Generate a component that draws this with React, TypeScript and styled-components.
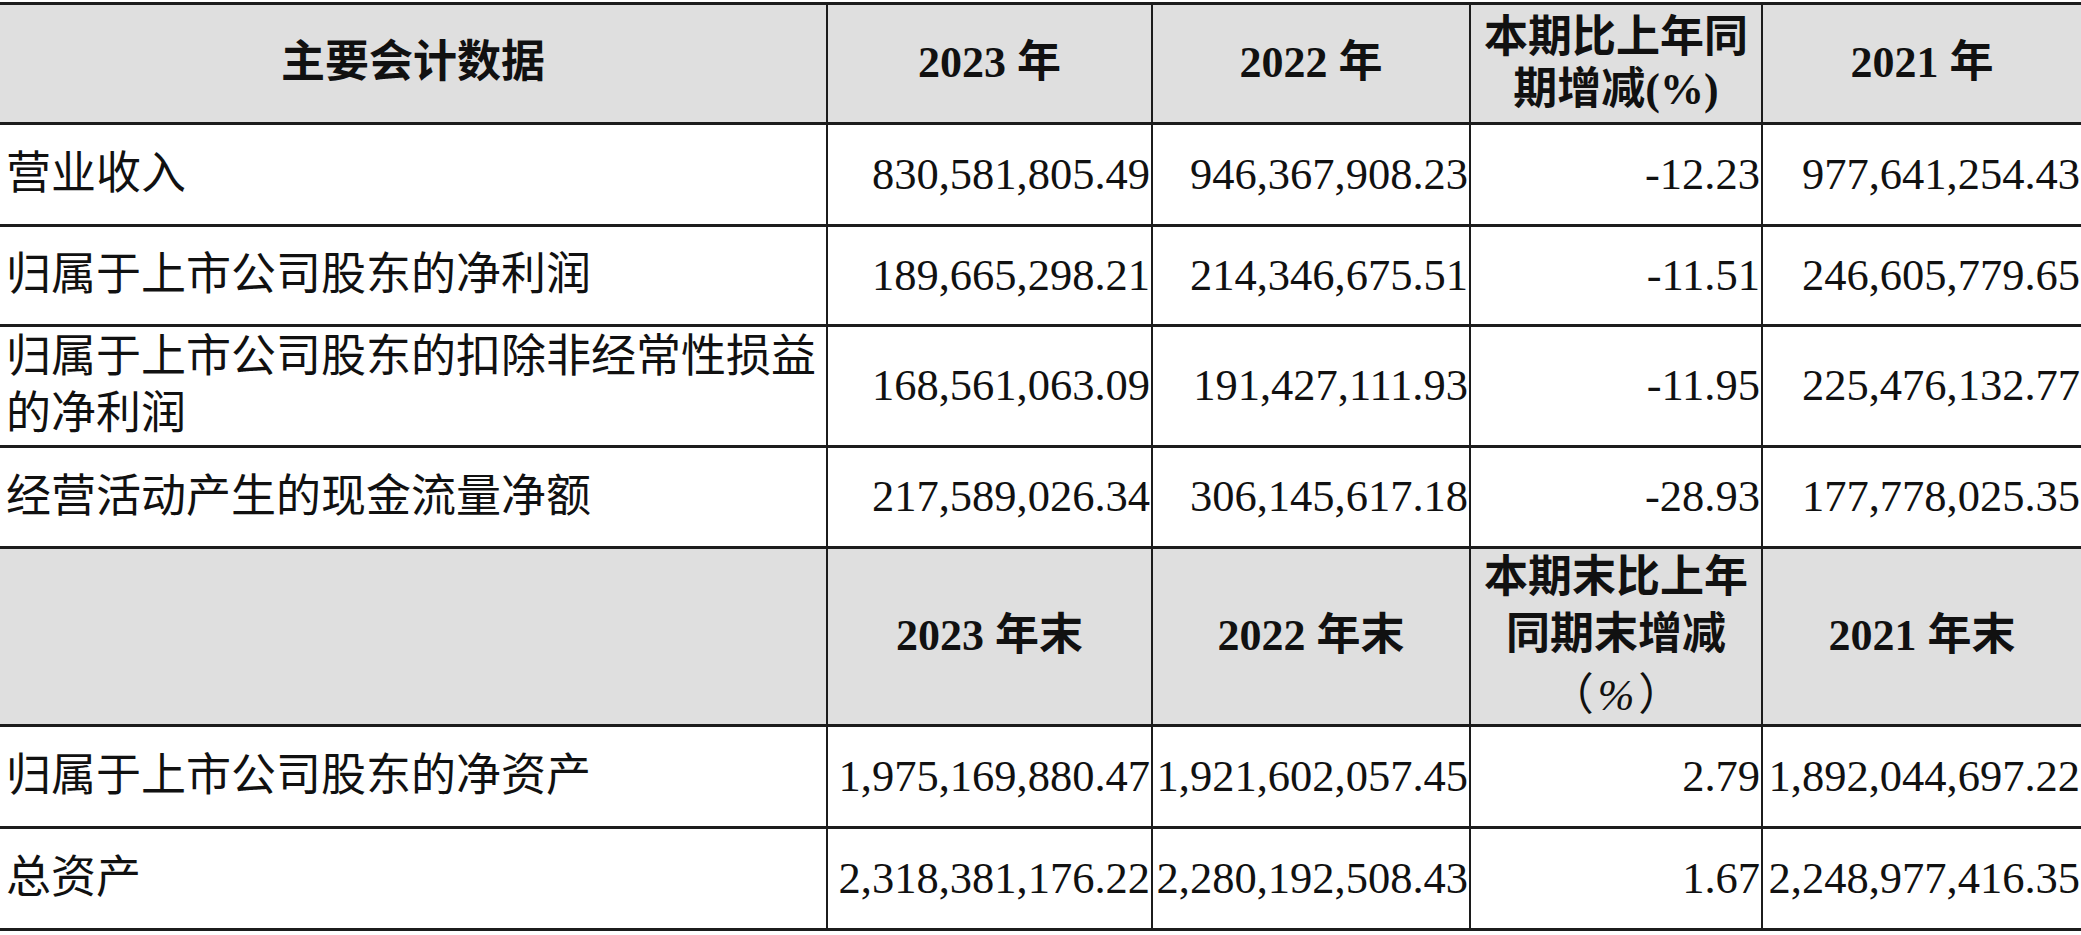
import styled, { createGlobalStyle } from "styled-components";

const GlobalStyle = createGlobalStyle`
  html, body {
    margin: 0;
    padding: 0;
    background: #ffffff;
  }
  body {
    font-family: "Liberation Serif", "Noto Sans CJK SC", serif;
    color: #111111;
  }
`;

const periodRows = [
  ["营业收入", "830,581,805.49", "946,367,908.23", "-12.23", "977,641,254.43"],
  ["归属于上市公司股东的净利润", "189,665,298.21", "214,346,675.51", "-11.51", "246,605,779.65"],
  ["归属于上市公司股东的扣除非经常性损益\n的净利润", "168,561,063.09", "191,427,111.93", "-11.95", "225,476,132.77"],
  ["经营活动产生的现金流量净额", "217,589,026.34", "306,145,617.18", "-28.93", "177,778,025.35"],
];
const periodHeights = [102, 100, 121, 101];

const balanceRows = [
  ["归属于上市公司股东的净资产", "1,975,169,880.47", "1,921,602,057.45", "2.79", "1,892,044,697.22"],
  ["总资产", "2,318,381,176.22", "2,280,192,508.43", "1.67", "2,248,977,416.35"],
];
const balanceHeights = [102, 102];

function Lines({ text }: { text: string }) {
  const parts = text.split("\n");
  return (
    <>
      {parts.map((p, i) => (
        <span key={i}>
          {p}
          {i < parts.length - 1 && <br />}
        </span>
      ))}
    </>
  );
}

function DataRow({ row, h }: { row: string[]; h: number }) {
  return (
    <Tr $h={h}>
      <Label>
        <Lines text={row[0]} />
      </Label>
      {row.slice(1).map((v, i) => (
        <Num key={i}>{v}</Num>
      ))}
    </Tr>
  );
}

export default function App(): JSX.Element {
  return (
    <Page>
      <GlobalStyle />
      <Table>
        <colgroup>
          <col style={{ width: 827 }} />
          <col style={{ width: 325 }} />
          <col style={{ width: 318 }} />
          <col style={{ width: 292 }} />
          <col style={{ width: 319 }} />
        </colgroup>
        <tbody>
          <Tr $h={120}>
            <Head>主要会计数据</Head>
            <Head>2023 年</Head>
            <Head>2022 年</Head>
            <Head $lh={52}>
              本期比上年同
              <br />
              期增减(%)
            </Head>
            <Head>2021 年</Head>
          </Tr>
          {periodRows.map((r, i) => (
            <DataRow key={i} row={r} h={periodHeights[i]} />
          ))}
          <Tr $h={178}>
            <Head />
            <Head>2023 年末</Head>
            <Head>2022 年末</Head>
            <Head $lh={57}>
              本期末比上年
              <br />
              同期末增减
              <br />
              <Paren $side="open">（</Paren>
              <Pct>%</Pct>
              <Paren $side="close">）</Paren>
            </Head>
            <Head>2021 年末</Head>
          </Tr>
          {balanceRows.map((r, i) => (
            <DataRow key={i} row={r} h={balanceHeights[i]} />
          ))}
        </tbody>
      </Table>
    </Page>
  );
}

const Page = styled.div`
  width: 2081px;
  padding-top: 2px;
  overflow: hidden;
`;

const Table = styled.table`
  width: 2081px;
  table-layout: fixed;
  border-collapse: collapse;
  border-top: 3px solid #1c1c1c;
  border-bottom: 3px solid #1c1c1c;
`;

const Tr = styled.tr<{ $h: number }>`
  height: ${(p) => p.$h}px;
  border-top: 3px solid #1c1c1c;
`;

const Cell = styled.td`
  padding: 0;
  border-left: 2px solid #1c1c1c;
  vertical-align: middle;
  white-space: nowrap;
  overflow: hidden;

  &:first-child {
    border-left: none;
  }
`;

const Head = styled(Cell)<{ $lh?: number }>`
  background: #dfdfdf;
  text-align: center;
  font-weight: 700;
  font-size: 44px;
  line-height: ${(p) => (p.$lh ? `${p.$lh}px` : "1.2")};
`;

const Paren = styled.span<{ $side: "open" | "close" }>`
  display: inline-block;
  width: 1em;
  font-family: "Noto Sans CJK SC", serif;
  font-weight: 400;
  text-align: ${(p) => (p.$side === "open" ? "right" : "left")};
`;

const Pct = styled.span`
  font-family: "Liberation Serif", serif;
  font-weight: 400;
  font-style: italic;
  padding: 0 4px;
`;

const Label = styled(Cell)`
  text-align: left;
  padding-left: 6px;
  font-size: 45px;
  line-height: 57px;
`;

const Num = styled(Cell)`
  text-align: right;
  padding-right: 1px;
  font-size: 44.5px;
  line-height: 1.2;
`;
